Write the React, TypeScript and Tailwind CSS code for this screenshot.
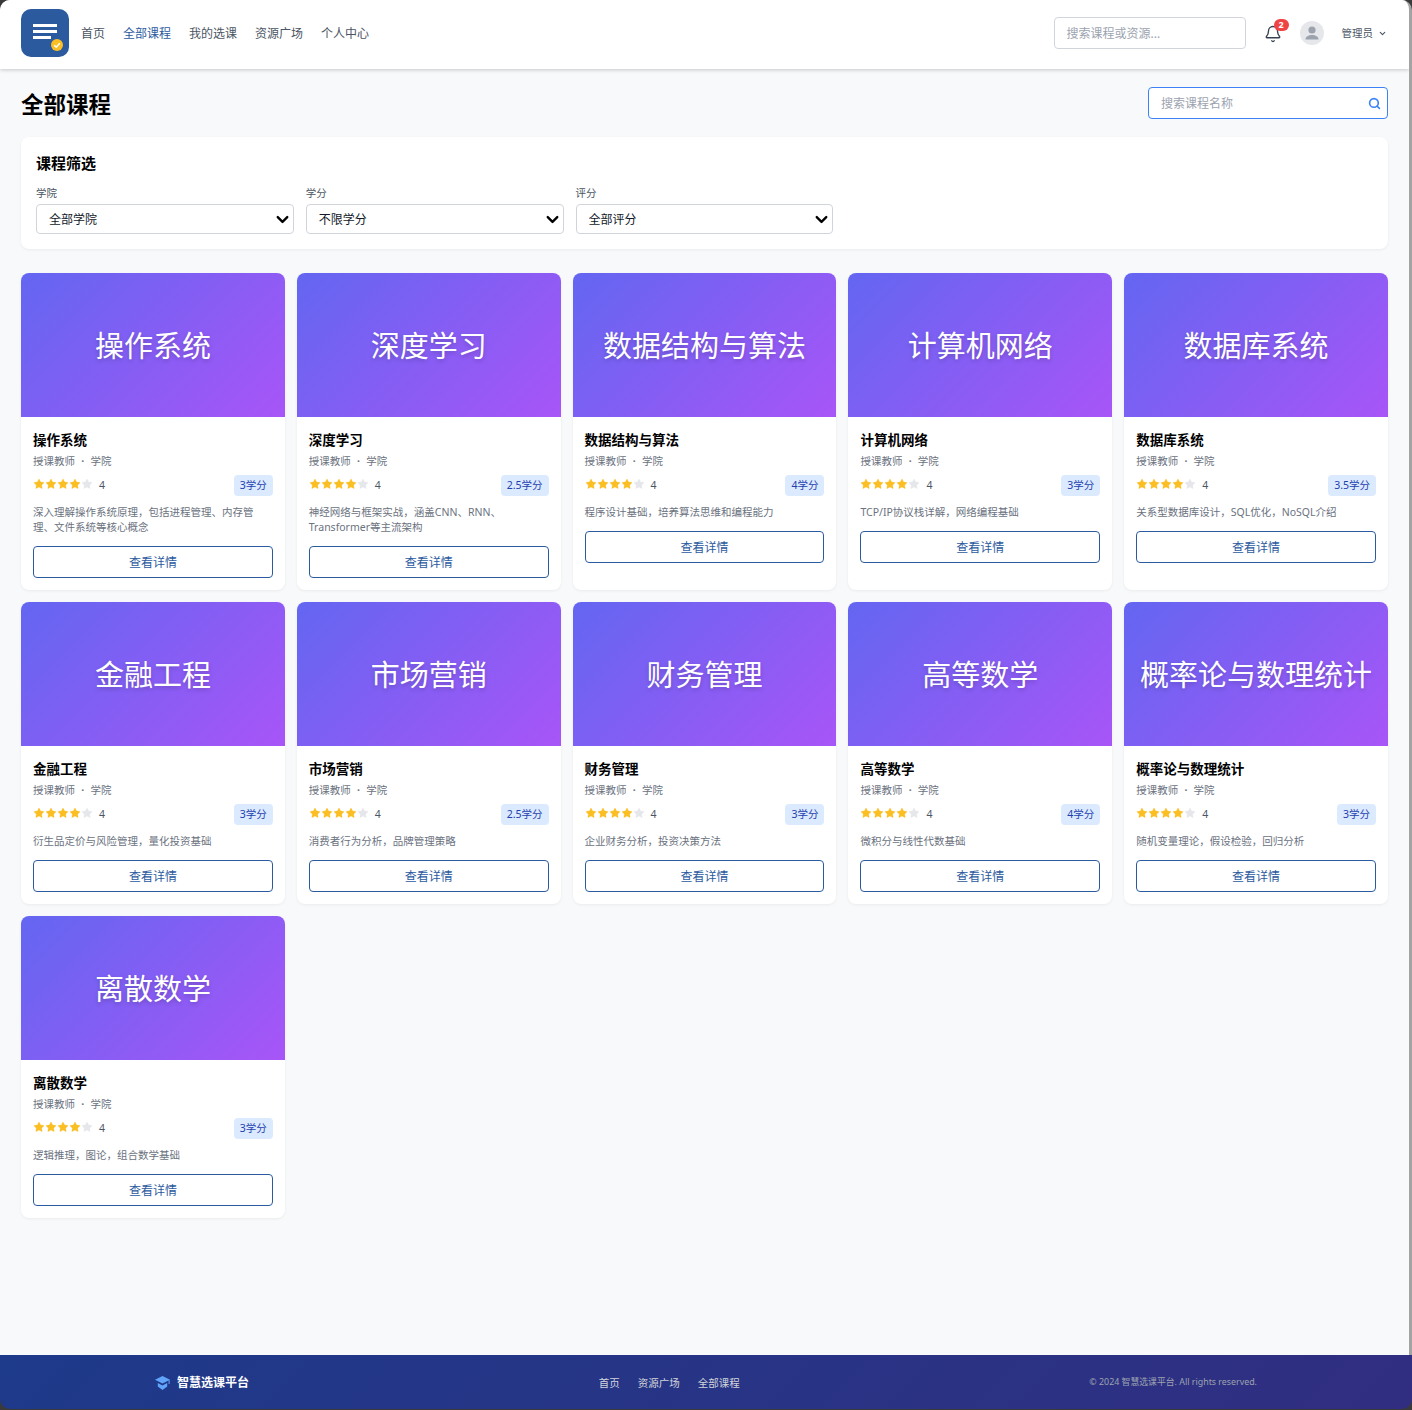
import React from 'react';
import { Bell, ChevronDown, Search, Star } from 'lucide-react';

interface Course {
  name: string;
  credit: string;
  desc: string;
}

const courses: Course[] = [
  { name: '操作系统', credit: '3学分', desc: '深入理解操作系统原理，包括进程管理、内存管理、文件系统等核心概念' },
  { name: '深度学习', credit: '2.5学分', desc: '神经网络与框架实战，涵盖CNN、RNN、Transformer等主流架构' },
  { name: '数据结构与算法', credit: '4学分', desc: '程序设计基础，培养算法思维和编程能力' },
  { name: '计算机网络', credit: '3学分', desc: 'TCP/IP协议栈详解，网络编程基础' },
  { name: '数据库系统', credit: '3.5学分', desc: '关系型数据库设计，SQL优化，NoSQL介绍' },
  { name: '金融工程', credit: '3学分', desc: '衍生品定价与风险管理，量化投资基础' },
  { name: '市场营销', credit: '2.5学分', desc: '消费者行为分析，品牌管理策略' },
  { name: '财务管理', credit: '3学分', desc: '企业财务分析，投资决策方法' },
  { name: '高等数学', credit: '4学分', desc: '微积分与线性代数基础' },
  { name: '概率论与数理统计', credit: '3学分', desc: '随机变量理论，假设检验，回归分析' },
  { name: '离散数学', credit: '3学分', desc: '逻辑推理，图论，组合数学基础' },
];

const navItems = ['首页', '全部课程', '我的选课', '资源广场', '个人中心'];

const filters = [
  { label: '学院', value: '全部学院' },
  { label: '学分', value: '不限学分' },
  { label: '评分', value: '全部评分' },
];

const Logo = () => (
  <svg width="48" height="48" viewBox="0 0 48 48" className="shrink-0">
    <rect width="48" height="48" rx="10" fill="#2b5a9e" />
    <rect x="12" y="15" width="24" height="3" fill="#fff" />
    <rect x="12" y="21" width="24" height="3" fill="#fff" />
    <rect x="12" y="27" width="18" height="3" fill="#fff" />
    <circle cx="36" cy="36" r="6" fill="#fbbf24" />
    <path d="M33.2 36.2l2 2 3.600-4" fill="none" stroke="#fff" strokeWidth="1.5" />
  </svg>
);

const Avatar = () => (
  <svg width="24" height="24" viewBox="0 0 24 24" className="shrink-0">
    <circle cx="12" cy="12" r="12" fill="#e5e7eb" />
    <circle cx="12" cy="9" r="3.600" fill="#9ca3af" />
    <path d="M5.500 18.500c0-3 3-4.500 6.500-4.500s6.500 1.500 6.500 4.500z" fill="#9ca3af" />
  </svg>
);

const CapIcon = () => (
  <svg width="15" height="14" viewBox="0 0 15 14" className="shrink-0">
    <path d="M7.500 0L15 3.800 7.500 7.600 0 3.800z" fill="#60a5fa" />
    <path d="M2.800 7l4.700 2.400L12.200 7v3.600L7.500 14l-4.700-3.400z" fill="#60a5fa" />
    <rect x="13.600" y="4" width="1" height="4" fill="#60a5fa" />
  </svg>
);

const Header = () => (
  <header className="relative z-10 flex h-[69px] items-center justify-between bg-white px-[21px] pb-[3px] shadow-[0_1px_4px_rgba(0,0,0,0.2)]">
    <div className="flex items-center gap-3">
      <Logo />
      <nav className="flex items-center gap-[18px] pt-[2px] text-xs">
        {navItems.map((item) => (
          <span key={item} className={item === '全部课程' ? 'text-[#2b5a9e]' : 'text-[#4b5563]'}>
            {item}
          </span>
        ))}
      </nav>
    </div>
    <div className="flex items-center">
      <div className="flex h-8 w-48 items-center rounded border border-[#d1d5db] px-3 pt-[2px] text-xs text-[#9ca3af]">
        搜索课程或资源...
      </div>
      <div className="relative ml-[18px] mt-[2px] h-[18px] w-[18px]">
        <Bell className="h-[18px] w-[18px] text-[#374151]" strokeWidth={1.8} />
        <span className="absolute -top-[6px] left-[10px] flex h-3 w-[15px] items-center justify-center rounded-full bg-[#ef4444] text-[9px] font-bold text-white">
          2
        </span>
      </div>
      <div className="ml-[18px]">
        <Avatar />
      </div>
      <span className="ml-[18px] pt-[2px] text-[10.5px] text-[#4b5563]">管理员</span>
      <ChevronDown className="ml-[5px] mr-[1px] h-[9px] w-[9px] text-[#4b5563]" strokeWidth={3} />
    </div>
  </header>
);

const Filters = () => (
  <section className="mt-[18px] rounded-lg bg-white px-[15px] pb-[15px] pt-[15px] shadow-[0_1px_3px_rgba(0,0,0,0.06)]">
    <h2 className="text-[15px] font-bold leading-[22px] text-black">课程筛选</h2>
    <div className="mt-3 grid grid-cols-5 gap-3">
      {filters.map((f) => (
        <div key={f.label}>
          <label className="block text-[10.5px] leading-[15px] text-[#4b5563]">{f.label}</label>
          <div className="relative mt-[3px]">
            <select
              defaultValue={f.value}
              className="h-[30px] w-full appearance-none rounded border border-[#d1d5db] bg-white px-3 pt-[2px] text-xs text-[#111827]"
            >
              <option>{f.value}</option>
            </select>
            <ChevronDown
              className="pointer-events-none absolute right-[2px] top-[6px] h-[19px] w-[19px] text-black"
              strokeWidth={3}
            />
          </div>
        </div>
      ))}
    </div>
  </section>
);

const Stars = () => (
  <div className="mb-1 flex items-center">
    {[0, 1, 2, 3, 4].map((i) => (
      <Star
        key={i}
        strokeWidth={0.5}
        className={i < 4 ? 'h-3 w-3 fill-[#fbbf24] text-[#fbbf24]' : 'h-3 w-3 fill-[#e5e7eb] text-[#e5e7eb]'}
      />
    ))}
  </div>
);

const CourseCard = ({ course }: { course: Course }) => (
  <article className="overflow-hidden rounded-lg bg-white shadow-[0_1px_3px_rgba(0,0,0,0.06)]">
    <div className="flex h-36 items-center justify-center bg-[linear-gradient(135deg,#6366f1,#a855f7)] pt-[2px] text-[29px] text-white [text-shadow:0_2px_4px_rgba(0,0,0,0.2)]">
      {course.name}
    </div>
    <div className="p-3">
      <h3 className="text-[13.5px] font-bold leading-[22px] text-black">{course.name}</h3>
      <p className="mt-[2px] text-[10.5px] leading-[17px] text-[#6b7280]">
        授课教师 <span className="mx-[3.5px] font-bold">·</span> 学院
      </p>
      <div className="mt-[5px] flex items-center justify-between">
        <div className="flex items-center text-[10.5px] text-[#4b5563]">
          <Stars />
          <span className="ml-[6px]">4</span>
        </div>
        <span className="flex h-[21px] items-center rounded bg-[#dbeafe] px-[6px] text-[10.5px] text-[#1e40af]">
          {course.credit}
        </span>
      </div>
      <p className="mt-[9px] text-[10.5px] leading-[15px] text-[#6b7280]">{course.desc}</p>
      <button className="mt-[11px] flex h-8 w-full items-center justify-center rounded border border-[#2b5a9e] bg-white pt-[2px] text-xs text-[#2b5a9e]">
        查看详情
      </button>
    </div>
  </article>
);

const Footer = () => (
  <footer className="h-[54px] rounded-b-[10px] bg-[linear-gradient(135deg,#1e3a8a,#312e81)]">
    <div className="mx-auto flex h-full w-[1102px] items-center justify-between pt-[2px]">
      <div className="flex items-center gap-[7px] text-xs font-bold text-white">
        <CapIcon />
        智慧选课平台
      </div>
      <div className="flex gap-[18px] pt-[2px] text-[10.5px] text-[#d1d5db]">
        <span>首页</span>
        <span>资源广场</span>
        <span>全部课程</span>
      </div>
      <div className="text-[8.85px] text-[#9ca3af]">© 2024 智慧选课平台. All rights reserved.</div>
    </div>
  </footer>
);

export default function App() {
  return (
    <div className="flex h-[1410px] flex-col bg-[#3a3a3a] pb-[1px] font-['Noto_Sans','Noto_Sans_CJK_SC',sans-serif]">
      <div className="flex flex-1 flex-col overflow-hidden rounded-t-[10px] border-r-[3px] border-[#a3a3a3] bg-[#f8f9fb]">
        <Header />
        <main className="flex-1 px-[21px] pt-[18px]">
          <div className="flex h-8 items-center justify-between">
            <h1 className="mt-1 text-[22.5px] font-bold text-black">全部课程</h1>
            <div className="flex h-8 w-60 items-center justify-between rounded border border-[#3b82f6] bg-white pl-3 pr-[6px] pt-[2px] text-xs text-[#9ca3af]">
              搜索课程名称
              <Search className="-mt-[2px] h-[13px] w-[13px] text-[#3b82f6]" strokeWidth={3} />
            </div>
          </div>
          <Filters />
          <div className="mt-6 grid grid-cols-5 gap-3">
            {courses.map((c) => (
              <CourseCard key={c.name} course={c} />
            ))}
          </div>
        </main>
      </div>
      <Footer />
    </div>
  );
}
